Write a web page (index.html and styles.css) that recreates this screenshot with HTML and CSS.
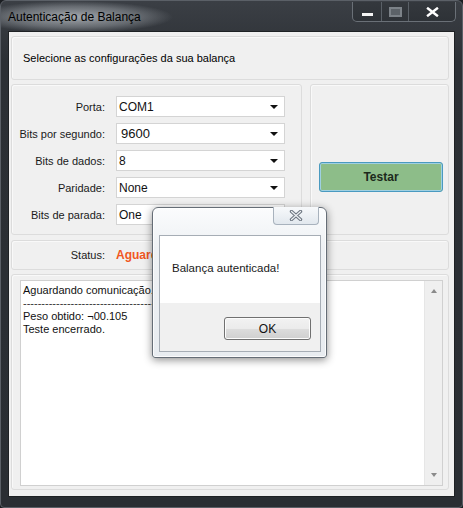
FILE: index.html
```html
<!DOCTYPE html>
<html lang="pt">
<head>
<meta charset="utf-8">
<title>Autenticação de Balança</title>
<link rel="stylesheet" href="styles.css">
</head>
<body>
<div class="window">
  <div class="titlebar">
    <span class="title">Autenticação de Balança</span>
    <div class="caption-buttons">
      <div class="cbtn cbtn-min"><span class="glyph-min"></span></div>
      <div class="cbtn cbtn-max"><span class="glyph-max"></span></div>
      <div class="cbtn cbtn-close">
        <svg width="13" height="10" viewBox="0 0 13 10"><path d="M2 1.5 L11 8.5 M11 1.5 L2 8.5" stroke="#fff" stroke-width="2.4" stroke-linecap="square"/></svg>
      </div>
    </div>
  </div>
  <div class="client">
    <div class="panel header-panel">Selecione as configurações da sua balança</div>
    <div class="panels-row">
      <div class="panel form-panel">
        <div class="field"><span class="label">Porta:</span><div class="combo"><span>COM1</span><i class="arrow"></i></div></div>
        <div class="field"><span class="label">Bits por segundo:</span><div class="combo combo-big"><span>9600</span><i class="arrow"></i></div></div>
        <div class="field"><span class="label">Bits de dados:</span><div class="combo"><span>8</span><i class="arrow"></i></div></div>
        <div class="field"><span class="label">Paridade:</span><div class="combo"><span>None</span><i class="arrow"></i></div></div>
        <div class="field"><span class="label">Bits de parada:</span><div class="combo"><span>One</span><i class="arrow"></i></div></div>
      </div>
      <div class="panel side-panel">
        <button class="testar">Testar</button>
      </div>
    </div>
    <div class="panel status-panel">
      <span class="label">Status:</span><span class="status-value">Aguardando</span>
    </div>
    <div class="panel log-panel">
      <div class="textbox">
        <div class="log-text">
          <div>Aguardando comunicação...</div>
          <div class="dashes">--------------------------------------</div>
          <div>Peso obtido: <span class="odd">¬</span>00.105</div>
          <div>Teste encerrado.</div>
        </div>
        <div class="scrollbar"><i class="up"></i><i class="down"></i></div>
      </div>
    </div>
  </div>

  <div class="dialog">
    <div class="dlg-close">
      <svg width="14" height="11" viewBox="0 0 14 11"><path d="M2.5 1.5 L11.5 9.5 M11.5 1.5 L2.5 9.5" stroke="#6f7883" stroke-width="3.4" stroke-linecap="round"/><path d="M2.5 1.5 L11.5 9.5 M11.5 1.5 L2.5 9.5" stroke="#eef1f4" stroke-width="1.2" stroke-linecap="round"/></svg>
    </div>
    <div class="dlg-body">
      <div class="dlg-message">Balança autenticada!</div>
      <div class="dlg-footer"><button class="ok">OK</button></div>
    </div>
  </div>
</div>
</body>
</html>
```

FILE: styles.css
```css
html, body {
  margin: 0;
  padding: 0;
  background: #1b1e22;
}

.window {
  position: relative;
  width: 463px;
  height: 508px;
  box-sizing: border-box;
  border: 1px solid #5b6067;
  border-radius: 6px 6px 4px 4px;
  background: linear-gradient(#3b3f45, #2c3035 60px, #2a2e33);
  font-family: "Liberation Sans", Arial, sans-serif;
  display: flex;
  flex-direction: column;
  overflow: hidden;
}

.titlebar {
  height: 30px;
  display: flex;
  align-items: flex-start;
  justify-content: space-between;
  background: radial-gradient(ellipse 100px 16px at 72px 16px, rgba(200,205,210,0.75), rgba(190,196,202,0.35) 65%, transparent);
}

.title {
  margin: 9px 0 0 7px;
  font-size: 12px;
  color: #000;
}

.caption-buttons {
  display: flex;
  margin: 1px 6px 0 0;
  height: 19px;
  border: 1px solid #6a7077;
  border-top: none;
  border-radius: 0 0 5px 5px;
  background: linear-gradient(#34383d, #2e3237);
}

.cbtn {
  display: flex;
  align-items: center;
  justify-content: center;
  height: 19px;
}

.cbtn-min { width: 28px; border-right: 1px solid #5a6067; }
.cbtn-max { width: 26px; border-right: 1px solid #5a6067; }
.cbtn-close { width: 46px; }

.glyph-min {
  width: 11px;
  height: 3px;
  margin-top: 6px;
  background: #f4f4f4;
}

.glyph-max {
  width: 9px;
  height: 6px;
  border: 2px solid #7c8288;
  background: #5c6268;
}

.client {
  margin: 0 7px;
  height: 466px;
  box-sizing: border-box;
  border: 1px solid #1e2124;
  background: #f0f0f0;
  padding: 4px 5px 6px 2px;
  display: flex;
  flex-direction: column;
  gap: 4px;
  font-size: 11px;
  color: #000;
}

.panel {
  box-sizing: border-box;
  border: 1px solid #dcdcdc;
  border-radius: 3px;
  box-shadow: inset 1px 1px 0 #f9f9f9;
  background: #f0f0f0;
}

.header-panel {
  height: 44px;
  display: flex;
  align-items: center;
  padding: 0 0 0 11px;
  font-size: 11px;
}

.panels-row {
  display: flex;
  gap: 8px;
  height: 151px;
}

.form-panel {
  width: 291px;
  padding: 11px 0 0 0;
  display: flex;
  flex-direction: column;
  gap: 6px;
}

.field {
  display: flex;
  align-items: center;
  gap: 11px;
  height: 21px;
}

.label {
  width: 93px;
  text-align: right;
  font-size: 11px;
  color: #1a1a1a;
  flex: none;
}

.combo {
  width: 169px;
  height: 21px;
  box-sizing: border-box;
  border: 1px solid #d4d4d4;
  background: #fff;
  display: flex;
  align-items: center;
  justify-content: space-between;
  padding: 0 6px 0 2px;
  font-size: 12px;
  color: #111;
}

.combo-big span {
  font-size: 13px;
  padding-left: 2px;
}

.arrow {
  width: 0;
  height: 0;
  border-left: 4px solid transparent;
  border-right: 4px solid transparent;
  border-top: 4px solid #111;
  margin-top: 1px;
}

.side-panel {
  flex: 1;
  padding: 77px 0 0 8px;
}

.testar {
  width: 124px;
  height: 30px;
  box-sizing: border-box;
  border: 1px solid #4a9ac0;
  border-radius: 3px;
  box-shadow: inset 0 0 0 1px #9fd0e2;
  background: #8dbd89;
  font-family: "Liberation Sans", Arial, sans-serif;
  font-size: 12px;
  font-weight: bold;
  color: #1c2a1c;
  padding: 0;
}

.status-panel {
  height: 30px;
  margin-top: 1px;
  display: flex;
  align-items: center;
  gap: 11px;
  padding-bottom: 1px;
}

.status-value {
  color: #f0571f;
  font-weight: bold;
  font-size: 12px;
}

.log-panel {
  flex: 1;
  padding: 5px 5px 3px 8px;
  display: flex;
}

.textbox {
  flex: 1;
  display: flex;
  border: 1px solid #d0d0d0;
  background: #fff;
}

.log-text {
  flex: 1;
  padding: 3px 0 0 2px;
  font-size: 11px;
  line-height: 13px;
  color: #111;
}

.dashes {
  white-space: nowrap;
  color: #333;
}

.scrollbar {
  width: 17px;
  background: #efefef;
  border-left: 1px solid #e6e6e6;
  display: flex;
  flex-direction: column;
  justify-content: space-between;
  align-items: center;
  padding: 8px 0 8px;
}

.scrollbar .up {
  width: 0; height: 0;
  border-left: 3.5px solid transparent;
  border-right: 3.5px solid transparent;
  border-bottom: 4px solid #8a8a8a;
}

.scrollbar .down {
  width: 0; height: 0;
  border-left: 3.5px solid transparent;
  border-right: 3.5px solid transparent;
  border-top: 4px solid #8a8a8a;
}

/* message box */
.dialog {
  position: absolute;
  left: 151px;
  top: 206px;
  width: 175px;
  height: 151px;
  box-sizing: border-box;
  border: 1px solid #656d76;
  border-radius: 6px 6px 3px 3px;
  background: linear-gradient(#fbfcfd, #eef1f4 40px, #e8ecf0);
  box-shadow: 0 2px 8px rgba(0,0,0,0.45), inset 0 0 0 1px rgba(255,255,255,0.8);
  padding: 27px 5px 5px 6px;
  display: flex;
}

.dlg-close {
  position: absolute;
  top: -1px;
  left: 120px;
  width: 46px;
  height: 18px;
  box-sizing: border-box;
  border: 1px solid #a8b2bd;
  border-top: none;
  border-radius: 0 0 4px 4px;
  background: linear-gradient(#f7f9fb, #e2e8ee);
  display: flex;
  align-items: center;
  justify-content: center;
}

.dlg-body {
  flex: 1;
  border: 1px solid #a6adb5;
  display: flex;
  flex-direction: column;
  background: #f0f0f0;
}

.dlg-message {
  height: 67px;
  background: #fff;
  box-sizing: border-box;
  padding: 26px 0 0 12px;
  font-size: 11.5px;
  color: #1a1a1a;
}

.dlg-footer {
  flex: 1;
  display: flex;
  justify-content: flex-end;
  align-items: flex-start;
  padding: 14px 9px 0 0;
}

.ok {
  width: 87px;
  height: 23px;
  box-sizing: border-box;
  border: 1px solid #707070;
  border-radius: 3px;
  background: linear-gradient(#f2f2f2, #ebebeb 50%, #dddddd 51%, #cfcfcf);
  box-shadow: inset 0 0 0 1px #fcfcfc;
  font-family: "Liberation Sans", Arial, sans-serif;
  font-size: 12px;
  color: #111;
  padding: 0;
}
```
